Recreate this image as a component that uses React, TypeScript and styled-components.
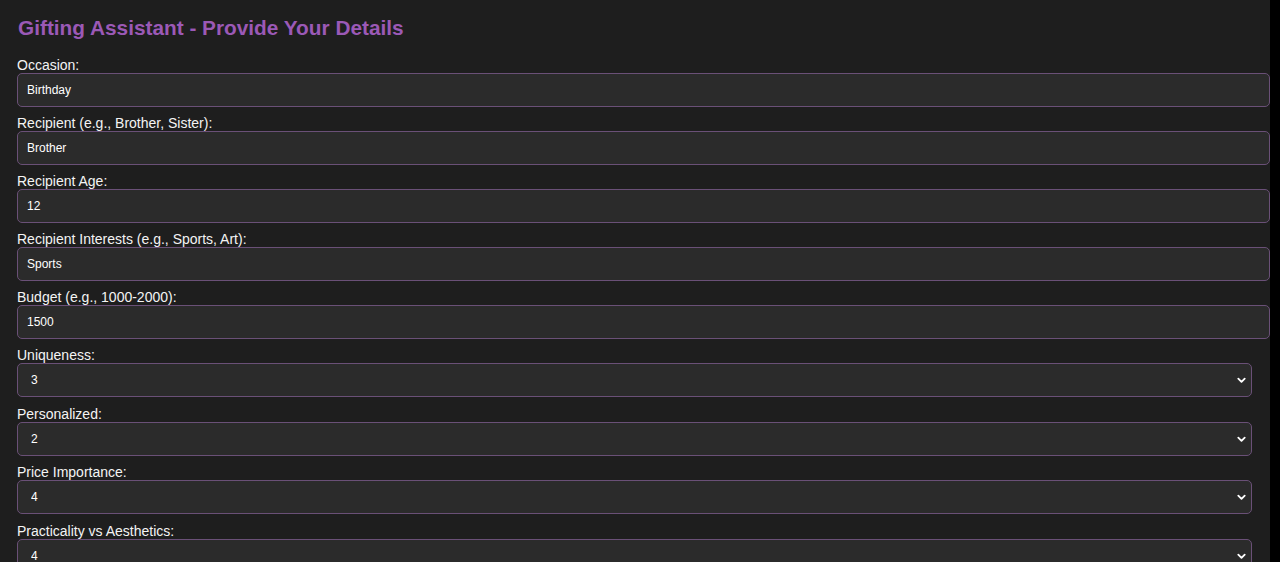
import React from "react";
import styled, { createGlobalStyle } from "styled-components";

const Global = createGlobalStyle`
  html, body { margin: 0; padding: 0; background: #1e1e1e; }
  body { font-family: "Liberation Sans", Arial, sans-serif; color: #f2f2f2; }
  * { box-sizing: border-box; }
`;

const Page = styled.div`
  display: flex;
  min-height: 100vh;
`;

const Main = styled.main`
  flex: 1;
  background: #1e1e1e;
  padding: 16px 0 24px 17px;
`;

const Strip = styled.div`
  width: 10px;
  background: #000;
`;

const Title = styled.h2`
  margin: 0 0 17px 1px;
  font-size: 20.8px;
  line-height: 24px;
  font-weight: 700;
  color: #9b59b6;
`;

const Field = styled.div<{ $select?: boolean }>`
  display: flex;
  flex-direction: column;
  margin-bottom: ${(p) => (p.$select ? "8.5px" : "8px")};
`;

const Label = styled.label`
  display: block;
  font-size: 14px;
  line-height: 16px;
  color: #f4f4f4;
`;

const Input = styled.input`
  width: 100%;
  height: 34px;
  padding: 0 9px;
  font-family: "Liberation Sans", Arial, sans-serif;
  font-size: 12px;
  color: #ffffff;
  background: #2b2b2b;
  border: 1px solid #6a5077;
  border-radius: 5px;
  outline: none;
`;

const SelectWrap = styled.div`
  position: relative;
  width: calc(100% - 18px);
`;

const Select = styled.select`
  width: 100%;
  height: 34px;
  padding: 0 13px;
  font-family: "Liberation Sans", Arial, sans-serif;
  font-size: 12px;
  color: #ffffff;
  background: #2b2b2b;
  border: 1px solid #6a5077;
  border-radius: 5px;
  outline: none;
  appearance: none;
  -webkit-appearance: none;
`;

const Chevron = styled.svg`
  position: absolute;
  right: 5px;
  top: 50%;
  transform: translateY(-50%);
  width: 11px;
  height: 11px;
  pointer-events: none;
`;

const inputs = [
  { label: "Occasion:", value: "Birthday" },
  { label: "Recipient (e.g., Brother, Sister):", value: "Brother" },
  { label: "Recipient Age:", value: "12" },
  { label: "Recipient Interests (e.g., Sports, Art):", value: "Sports" },
  { label: "Budget (e.g., 1000-2000):", value: "1500" },
];

const selects = [
  { label: "Uniqueness:", value: "3" },
  { label: "Personalized:", value: "2" },
  { label: "Price Importance:", value: "4" },
  { label: "Practicality vs Aesthetics:", value: "4" },
];

export default function App() {
  return (
    <>
      <Global />
      <Page>
        <Main>
          <Title>Gifting Assistant - Provide Your Details</Title>
          {inputs.map((f) => (
            <Field key={f.label}>
              <Label>{f.label}</Label>
              <Input defaultValue={f.value} />
            </Field>
          ))}
          {selects.map((f) => (
            <Field key={f.label} $select>
              <Label>{f.label}</Label>
              <SelectWrap>
                <Select defaultValue={f.value}>
                  {[1, 2, 3, 4, 5].map((n) => (
                    <option key={n} value={String(n)}>
                      {n}
                    </option>
                  ))}
                </Select>
                <Chevron viewBox="0 0 12 12">
                  <path d="M2.5 4.5 L6 8 L9.5 4.5" fill="none" stroke="#ffffff" strokeWidth="2" strokeLinecap="round" strokeLinejoin="round" />
                </Chevron>
              </SelectWrap>
            </Field>
          ))}
        </Main>
        <Strip />
      </Page>
    </>
  );
}
